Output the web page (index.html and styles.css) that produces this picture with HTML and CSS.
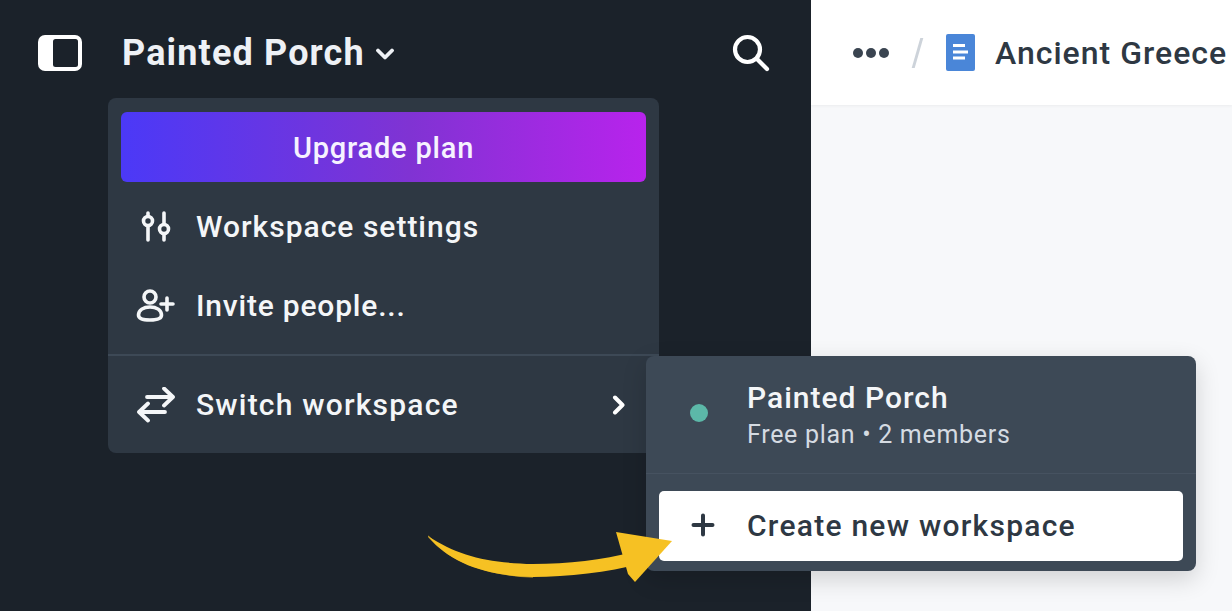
FILE: index.html
```html
<!DOCTYPE html>
<html lang="en">
<head>
    <meta charset="UTF-8">
    <title>Painted Porch</title>
    <link rel="stylesheet" href="styles.css">
</head>
<body>
    <div class="app">
        <aside class="sidebar">
            <header class="side-head">
                <svg class="toggle" width="44" height="36" viewBox="0 0 44 36">
                    <rect x="0" y="0" width="44" height="36" rx="7" fill="#fff"/>
                    <rect x="15" y="4" width="25" height="28" rx="2.5" fill="#1b222a"/>
                </svg>
                <span class="brand">Painted Porch</span>
                <svg class="caret" width="18" height="12" viewBox="0 0 18 12">
                    <path d="M2 2.5 9 9.5 16 2.5" fill="none" stroke="#eef1f5" stroke-width="3.8" stroke-linecap="round" stroke-linejoin="round"/>
                </svg>
                <svg class="search" width="38" height="38" viewBox="0 0 38 38">
                    <circle cx="15.5" cy="15.5" r="12.5" fill="none" stroke="#fff" stroke-width="4.2"/>
                    <path d="M25 25 35 35" fill="none" stroke="#fff" stroke-width="4.2" stroke-linecap="round"/>
                </svg>
            </header>

            <div class="menu">
                <div class="upgrade">Upgrade plan</div>
                <div class="menu-group">
                    <div class="menu-item">
                        <svg width="40" height="34" viewBox="0 0 40 34" fill="none" stroke="#f4f6f8" stroke-width="3.6" stroke-linecap="round">
                            <path d="M12 3v3M12 16v14M28 3v11M28 24v6"/>
                            <circle cx="12" cy="11" r="4.5"/>
                            <circle cx="28" cy="19" r="4.5"/>
                        </svg>
                        <span>Workspace settings</span>
                    </div>
                    <div class="menu-item invite">
                        <svg width="40" height="36" viewBox="0 0 40 36" fill="none" stroke="#f4f6f8" stroke-width="3.6" stroke-linecap="round">
                            <circle cx="14" cy="9" r="6"/>
                            <path d="M2.5 27c0-5 5-8 11.500-8s11.500 3 11.500 8c0 3-3 5-11.500 5s-11.500-2-11.500-5z"/>
                            <path d="M31 10v12M25 16h12"/>
                        </svg>
                        <span>Invite people...</span>
                    </div>
                </div>
                <div class="menu-foot">
                    <div class="menu-item">
                        <svg width="40" height="36" viewBox="0 0 40 36" fill="none" stroke="#f4f6f8" stroke-width="3.8" stroke-linecap="round" stroke-linejoin="round">
                            <path d="M11 10h26M28 1.500l9 8.500-9 8.500"/>
                            <path d="M29 25H3M12 16.500l-9 8.500 9 8.500"/>
                        </svg>
                        <span>Switch workspace</span>
                        <svg class="chevron" width="14" height="20" viewBox="0 0 14 20">
                            <path d="M3 2.500 10.500 10 3 17.500" fill="none" stroke="#fff" stroke-width="4" stroke-linecap="round" stroke-linejoin="round"/>
                        </svg>
                    </div>
                </div>
            </div>
        </aside>

        <main class="main">
            <div class="topbar">
                <div class="dots"><i></i><i></i><i></i></div>
                <span class="slash"></span>
                <svg class="doc" width="29" height="37" viewBox="0 0 29 37">
                    <rect width="29" height="37" rx="2" fill="#4a86d8"/>
                    <path d="M7 11.500h12M7 18h15M7 24h12" stroke="#fff" stroke-width="3.200" fill="none"/>
                </svg>
                <span class="doc-title">Ancient Greece</span>
            </div>
        </main>
    </div>

    <div class="submenu">
        <div class="current">
            <span class="dot"></span>
            <div class="ws-text">
                <div class="ws-name">Painted Porch</div>
                <div class="ws-meta">Free plan • 2 members</div>
            </div>
        </div>
        <div class="create">
            <svg width="24" height="24" viewBox="0 0 24 24">
                <path d="M12 2.500v19M2.500 12h19" stroke="#2e3843" stroke-width="4" stroke-linecap="round"/>
            </svg>
            <span>Create new workspace</span>
        </div>
    </div>

    <!-- hand drawn arrow -->
    <svg class="arrow" width="250" height="60" viewBox="0 0 250 60">
        <path d="M0 4C22 30 60 43 105 45" fill="none" stroke="#9c7f2a" stroke-width="1.500"/>
        <path d="M0 4C30 24 60 31 105 32C140 32 175 28 205 20L212 32C180 40 140 45 105 45C60 44 22 32 0 4Z" fill="#f6c123"/>
        <path d="M188 0 244 9 207 50 200 42Z" fill="#f6c123"/>
    </svg>
</body>
</html>
```

FILE: styles.css
```css
html, body {
    margin: 0;
    height: 100%;
    overflow: hidden;
    background: #fff;
}
body {
    font-family: "Roboto", "Liberation Sans", sans-serif;
    position: relative;
}
.app {
    display: flex;
    height: 611px;
}
.sidebar {
    width: 811px;
    flex: none;
    background: #1b222a;
    position: relative;
}
.side-head {
    height: 105px;
    display: flex;
    align-items: center;
    padding: 0 41px 0 38px;
    box-sizing: border-box;
}
.toggle {
    flex: none;
}
.brand {
    margin-left: 40px;
    font-size: 36px;
    font-weight: 700;
    color: #eef1f5;
    letter-spacing: 1.15px;
}
.caret {
    margin-left: 11px;
    margin-top: 2px;
}
.search {
    margin-left: auto;
}
.menu {
    position: absolute;
    left: 108px;
    top: 98px;
    width: 551px;
    height: 355px;
    background: #2e3843;
    border-radius: 8px;
    box-sizing: border-box;
    padding-top: 14px;
}
.upgrade {
    height: 70px;
    margin: 0 13px;
    border-radius: 6px;
    background: linear-gradient(90deg, #4b39f7, #8033d3 55%, #b823ec);
    color: #f6f2ff;
    font-size: 29px;
    font-weight: 500;
    letter-spacing: 0.8px;
    padding-top: 2px;
    box-sizing: border-box;
    display: flex;
    align-items: center;
    justify-content: center;
}
.menu-group {
    padding-top: 5px;
}
.menu-item {
    height: 79px;
    display: flex;
    align-items: center;
    padding: 0 33px 0 28px;
    color: #f4f6f8;
    font-size: 30px;
    font-weight: 500;
    letter-spacing: 1px;
}
.menu-item span {
    margin-left: 20px;
}
.invite {
    letter-spacing: 0.8px;
}
.menu-foot {
    border-top: 2px solid #3d4956;
    margin-top: 9px;
    padding-top: 9px;
}
.menu-foot .menu-item {
    letter-spacing: 1.2px;
}
.chevron {
    margin-left: auto;
}
.main {
    flex: 1;
    background: #f7f8fa;
}
.topbar {
    height: 105px;
    background: #fff;
    display: flex;
    align-items: center;
    padding-left: 42px;
    overflow: hidden;
    box-shadow: 0 1px 3px rgba(0, 0, 0, 0.05);
}
.dots {
    display: flex;
    gap: 3px;
}
.dots i {
    width: 10px;
    height: 10px;
    border-radius: 50%;
    background: #3a4450;
}
.slash {
    width: 3px;
    height: 30px;
    margin-left: 27px;
    background: #cdd3da;
    transform: skewX(-16deg);
}
.doc {
    margin-left: 27px;
    flex: none;
}
.doc-title {
    margin-left: 20px;
    font-size: 32px;
    font-weight: 500;
    color: #2e3843;
    letter-spacing: 1px;
    white-space: nowrap;
}
.submenu {
    position: absolute;
    left: 646px;
    top: 356px;
    width: 550px;
    height: 215px;
    background: #3d4956;
    border-radius: 8px;
    box-shadow: 0 8px 24px rgba(0, 0, 0, 0.16);
}
.current {
    height: 118px;
    display: flex;
    align-items: center;
    box-sizing: border-box;
    padding-left: 44px;
    border-bottom: 1px solid #465260;
}
.dot {
    width: 18px;
    height: 18px;
    border-radius: 50%;
    background: #5cb8a8;
    margin-right: 39px;
    margin-top: -4px;
}
.ws-text {
    margin-top: 2px;
}
.ws-name {
    font-size: 30px;
    font-weight: 500;
    color: #f4f6f8;
    line-height: 38px;
    letter-spacing: 1px;
}
.ws-meta {
    font-size: 25px;
    color: #d5dbe2;
    line-height: 36px;
    letter-spacing: 0.7px;
}
.create {
    margin: 17px 13px 0;
    height: 70px;
    background: #fff;
    border-radius: 5px;
    box-sizing: border-box;
    padding: 0 0 2px 32px;
    display: flex;
    align-items: center;
    color: #2e3843;
    font-size: 30px;
    font-weight: 500;
    letter-spacing: 1.25px;
}
.create span {
    margin-left: 32px;
}
.arrow {
    position: absolute;
    left: 428px;
    top: 532px;
}
```
